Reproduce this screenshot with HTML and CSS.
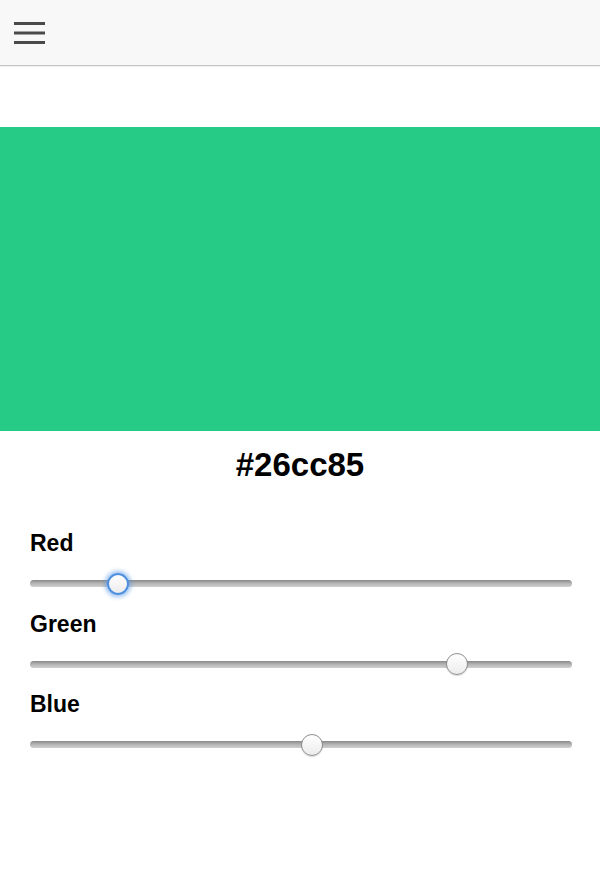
FILE: index.html
```html
<!DOCTYPE html>
<html>
<head>
<meta charset="utf-8">
<link rel="stylesheet" href="styles.css">
</head>
<body>
<header class="topbar">
  <button class="menu" aria-label="Menu">
    <svg width="32" height="24" viewBox="0 0 32 24">
      <rect x="0" y="1" width="31" height="3" fill="#4a4a4a"/>
      <rect x="0" y="10.5" width="31" height="3" fill="#4a4a4a"/>
      <rect x="0" y="20" width="31" height="3" fill="#4a4a4a"/>
    </svg>
  </button>
</header>
<main>
  <div class="swatch"></div>
  <h1 class="hex">#26cc85</h1>
  <section class="sliders">
    <label class="lbl" for="r">Red</label>
    <input class="range focused" id="r" type="range" min="0" max="255" value="38">
    <label class="lbl" for="g">Green</label>
    <input class="range" id="g" type="range" min="0" max="255" value="204">
    <label class="lbl" for="b">Blue</label>
    <input class="range" id="b" type="range" min="0" max="255" value="133">
  </section>
</main>
</body>
</html>
```
FILE: styles.css
```css
html, body {
  margin: 0;
  padding: 0;
  background: #fff;
  font-family: "Liberation Sans", Arial, sans-serif;
}
.topbar {
  height: 65px;
  background: #f8f8f8;
  border-bottom: 1px solid #c4c4c4;
  box-shadow: 0 1px 1px rgba(0,0,0,0.06);
  display: flex;
  align-items: center;
  padding-left: 14px;
}
.menu {
  border: 0;
  background: transparent;
  padding: 0;
  margin: 0;
  display: block;
  line-height: 0;
  margin-top: 1px;
}
.swatch {
  margin-top: 61px;
  height: 304px;
  background: #26cc85;
}
.hex {
  margin: 14px 0 0;
  font-size: 33px;
  line-height: 40px;
  font-weight: bold;
  text-align: center;
  color: #000;
}
.sliders {
  display: flex;
  flex-direction: column;
  padding: 45px 28px 0 30px;
}
.lbl {
  display: block;
  font-size: 23px;
  line-height: 26px;
  font-weight: bold;
  color: #000;
}
.range {
  -webkit-appearance: none;
  appearance: none;
  display: block;
  width: 100%;
  height: 22px;
  margin: 16.5px 0 16px;
  padding: 0;
  background: transparent;
  outline: none;
}
.range::-webkit-slider-runnable-track {
  height: 7px;
  border-radius: 4px;
  background: linear-gradient(#888888, #b2b2b2 45%, #d0d0d0);
  border: 0;
}
.range::-webkit-slider-thumb {
  -webkit-appearance: none;
  appearance: none;
  width: 22px;
  height: 22px;
  border-radius: 50%;
  border: 1px solid #8f8f8f;
  box-sizing: border-box;
  background: linear-gradient(#ffffff, #ececec);
  margin-top: -7.5px;
  box-shadow: 0 1px 1px rgba(0,0,0,0.15);
}
.range.focused::-webkit-slider-thumb {
  border: 2px solid #4d8fe0;
  box-shadow: 0 0 4px 2px rgba(85,150,230,0.6);
}
```
